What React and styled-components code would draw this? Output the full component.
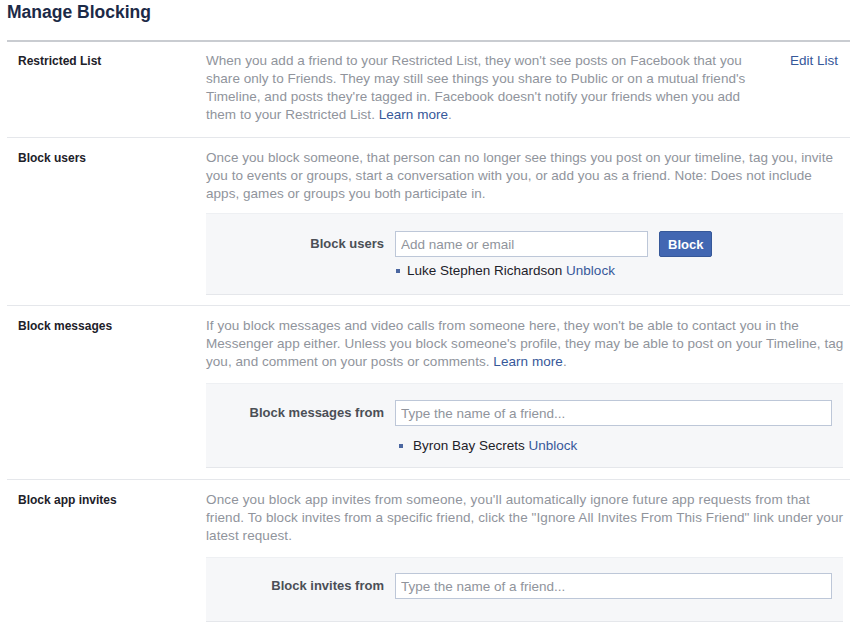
import React from "react";
import styled, { createGlobalStyle } from "styled-components";

const Global = createGlobalStyle`
  html, body { margin: 0; padding: 0; background: #fff; }
  body { font-family: "Liberation Sans", Arial, Helvetica, sans-serif; -webkit-font-smoothing: antialiased; }
  * { box-sizing: border-box; }
`;

const Page = styled.div`
  padding-left: 7px;
  width: 850px;
`;

const Title = styled.h1`
  margin: 0;
  height: 42px;
  padding-top: 1px;
  font-size: 17.5px;
  line-height: 22px;
  font-weight: bold;
  color: #1c2a47;
  border-bottom: 2px solid #c9ccd1;
`;

const Section = styled.div`
  display: grid;
  grid-template-columns: 188px 1fr;
  padding: ${(p) => p.$pt || 11}px 7px ${(p) => p.$pb || 10}px 11px;
  border-bottom: 1px solid #e5e7eb;
  &:last-child { border-bottom: none; }
`;

const Label = styled.div`
  font-size: 12px;
  font-weight: bold;
  line-height: 18px;
  color: #1d2129;
`;

const Content = styled.div`
  min-width: 0;
`;

const TopRow = styled.div`
  display: flex;
  justify-content: space-between;
  gap: 20px;
`;

const Desc = styled.p`
  margin: 0;
  font-size: ${(p) => p.$fs || 13}px;
  line-height: 18px;
  color: #90949c;
  white-space: nowrap;
  letter-spacing: ${(p) => p.$ls || 0}px;
`;

const Wide = styled.span`
  letter-spacing: ${(p) => p.$ls || 0}px;
`;

const Link = styled.a`
  color: #365899;
  text-decoration: none;
  cursor: pointer;
`;

const EditLink = styled(Link)`
  font-size: 13.5px;
  line-height: 18px;
  white-space: nowrap;
  margin-right: 5px;
`;

const Box = styled.div`
  margin-top: ${(p) => p.$mt || 11}px;
  background: #f6f7f9;
  border-top: 1px solid #eef0f3;
  border-bottom: 1px solid #e5e7eb;
  padding: ${(p) => p.$pt || 17}px 11px ${(p) => p.$pb || 14}px 0;
  display: grid;
  grid-template-columns: 178px 1fr;
  column-gap: 11px;
`;

const FieldLabel = styled.label`
  text-align: right;
  font-size: 13px;
  font-weight: bold;
  color: #4b4f56;
  line-height: 26px;
`;

const FieldRow = styled.div`
  display: flex;
  gap: 11px;
  align-items: center;
`;

const Input = styled.input`
  width: ${(p) => p.$w || "100%"};
  height: 26px;
  border: 1px solid #bdc7d8;
  background: #fff;
  padding: 0 5px;
  font-family: inherit;
  font-size: 13.5px;
  color: #1d2129;
  outline: none;
  &::placeholder { color: #90949c; }
`;

const Button = styled.button`
  height: 26px;
  padding: 0 8px;
  background: #4267b2;
  border: 1px solid #365899;
  border-radius: 2px;
  color: #fff;
  font-family: inherit;
  font-size: 13px;
  font-weight: bold;
`;

const List = styled.ul`
  grid-column: 2;
  list-style: none;
  margin: ${(p) => p.$mt || 6}px 0 0;
  padding: 0 0 0 ${(p) => p.$pl || 2}px;
`;

const Item = styled.li`
  display: flex;
  align-items: center;
  gap: ${(p) => p.$gap || 8}px;
  font-size: 13.5px;
  line-height: 18px;
  color: #1d2129;
  &::before {
    content: "";
    width: 4px;
    height: 4px;
    background: #4b67a1;
    flex: none;
  }
`;

export default function App() {
  return (
    <>
      <Global />
      <Page>
        <Title>Manage Blocking</Title>

        <Section $pt={10} $pb={13}>
          <Label>Restricted List</Label>
          <Content>
            <TopRow>
              <Desc $fs={13.5} $ls={0.03}>
                When you add a friend to your Restricted List, they won't see posts on Facebook that you
                <br />
                share only to Friends. They may still see things you share to Public or on a mutual friend's
                <br />
                Timeline, and posts they're tagged in. Facebook doesn't notify your friends when you add
                <br />
                them to your Restricted List. <Link>Learn more</Link>.
              </Desc>
              <EditLink>Edit List</EditLink>
            </TopRow>
          </Content>
        </Section>

        <Section $pb={10}>
          <Label>Block users</Label>
          <Content>
            <Desc $fs={13.5} $ls={0.04}>
              Once you block someone, that person can no longer see things you post on your timeline, tag you, invite
              <br />
              you to events or groups, start a conversation with you, or add you as a friend. Note: Does not include
              <br />
              apps, games or groups you both participate in.
            </Desc>
            <Box $mt={10} $pt={17} $pb={14}>
              <FieldLabel>Block users</FieldLabel>
              <FieldRow>
                <Input $w="253px" placeholder="Add name or email" />
                <Button>Block</Button>
              </FieldRow>
              <List $mt={5} $pl={1}>
                <Item $gap={7}>
                  <span>
                    Luke Stephen Richardson <Link>Unblock</Link>
                  </span>
                </Item>
              </List>
            </Box>
          </Content>
        </Section>

        <Section $pb={11}>
          <Label>Block messages</Label>
          <Content>
            <Desc $fs={13.5} $ls={0.05}>
              If you block messages and video calls from someone here, they won't be able to contact you in the
              <br />
              Messenger app either. Unless you block someone's profile, they may be able to post on your Timeline, tag
              <br />
              you, and comment on your posts or comments. <Link>Learn more</Link>.
            </Desc>
            <Box $mt={12} $pt={16} $pb={12}>
              <FieldLabel>Block messages from</FieldLabel>
              <FieldRow>
                <Input placeholder="Type the name of a friend..." />
              </FieldRow>
              <List $mt={11} $pl={4}>
                <Item $gap={10}>
                  <span>
                    Byron Bay Secrets <Link>Unblock</Link>
                  </span>
                </Item>
              </List>
            </Box>
          </Content>
        </Section>

        <Section>
          <Label>Block app invites</Label>
          <Content>
            <Desc $fs={13.5} $ls={0.08}>
              <Wide $ls={0.14}>
                Once you block app invites from someone, you'll automatically ignore future app requests from that
              </Wide>
              <br />
              friend. To block invites from a specific friend, click the "Ignore All Invites From This Friend" link under your
              <br />
              latest request.
            </Desc>
            <Box $mt={12} $pt={15} $pb={22}>
              <FieldLabel>Block invites from</FieldLabel>
              <FieldRow>
                <Input placeholder="Type the name of a friend..." />
              </FieldRow>
            </Box>
          </Content>
        </Section>
      </Page>
    </>
  );
}
